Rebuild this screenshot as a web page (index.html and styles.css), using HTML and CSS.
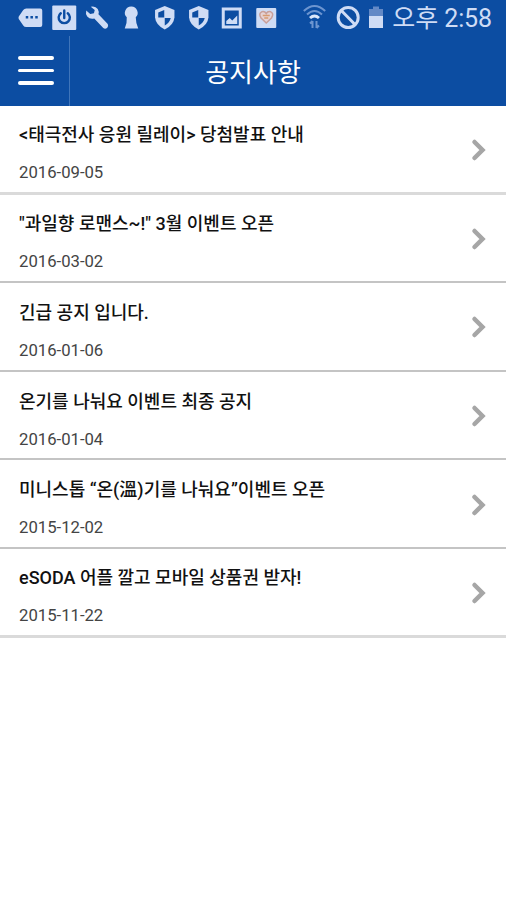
FILE: index.html
```
<!DOCTYPE html>
<html lang="ko">
<head>
  <meta charset="UTF-8">
  <meta name="viewport" content="width=device-width, initial-scale=1">
  <title>공지사항</title>
  <link rel="stylesheet" href="styles.css">
</head>
<body>

<!-- Status bar -->
<div class="statusbar">
  <div class="status-left">
    <svg viewBox="0 0 33 36"><path d="M8 8.500H22Q24 8.500 24 10.500V25Q24 27 22 27H8Q6 27 5 25.500L.5 19Q0 17.700 .5 16.500L5 10Q6 8.500 8 8.500Z"/><path class="cut" d="M7.500 16h2.500v2.500h-2.500zM12.200 16h2.500v2.500h-2.500zM17 16h2.500v2.500h-2.500z"/></svg>
    <svg viewBox="0 0 33 36"><rect y="5.500" width="24" height="24.500" rx="1"/><path class="cut-line" d="M8.500 13.200a5.600 5.600 0 1 0 7 0M12 10.500v7.500"/></svg>
    <svg viewBox="0 0 33 36"><path d="M5.500 6.700Q10 5.500 12.500 9Q14 11.500 13.200 14.200L22.500 24Q23.500 26 22 27.700Q20 29.500 18 28L9 18.500Q4.500 19.500 2 16.500Q0 13.500 1 10.500L5 14L8.700 13.200L9.500 10Z"/></svg>
    <svg viewBox="0 0 33 36"><path d="M12 6.500a6.300 6.300 0 0 1 4.500 10.800Q16.500 23 19 28.500H5.500Q8 23 7.500 17.300A6.300 6.300 0 0 1 12 6.500Z"/></svg>
    <svg viewBox="0 0 33 36"><path d="M12.500 6L22.200 10V17.500Q21.500 25 12.500 29.500Q3.500 25 2.800 17.500V10Z"/><path class="cut" d="M12 10V17.500H6V12.500ZM12.500 18H18.500Q17.500 22.500 12.500 25.500Z"/></svg>
    <svg viewBox="0 0 33 36"><path d="M12.500 6L22.200 10V17.500Q21.500 25 12.500 29.500Q3.500 25 2.800 17.500V10Z"/><path class="cut" d="M12 10V17.500H6V12.500ZM12.500 18H18.500Q17.500 22.500 12.500 25.500Z"/></svg>
    <svg viewBox="0 0 33 36"><rect x="2.500" y="7.500" width="20" height="21"/><path class="cut" d="M5.500 10.500h14v15h-14z"/><path d="M7 24V21L10.500 18L13 20.500L18 15.500V24Z"/></svg>
    <svg viewBox="0 0 33 36"><rect x="3" y="8" width="20" height="20" rx="1"/><path class="heart" d="M13 23L7.800 18Q5 13.500 8.500 11.800Q11.500 11 13 13.500Q14.500 11 17.500 11.800Q21 13.500 18.200 18Z"/><path class="heart-in" d="M9.500 15.500h7M11 18h4"/></svg>
  </div>
  <div class="status-right">
    <svg viewBox="0 0 33 36"><g class="wifi"><path d="M1.800 11Q12.500 1 23.200 11M5 14.500Q12.500 7.500 20 14.500"/><path class="wifi-on" d="M8 18Q12.500 14 17 18"/><path d="M10.500 28V21M8 23.500L10.500 21M14.500 21V28M14.500 28L17 25.500"/></g></svg>
    <svg viewBox="0 0 33 36"><path class="ban" d="M23.200 17.500a10 10 0 1 1-20 0a10 10 0 1 1 20 0M6.300 10.500L20 24.500"/></svg>
    <svg class="battery" viewBox="0 0 24 36"><path class="empty" d="M5 6.500h6v2.500h4v8H1V9h4z"/><path d="M1 16h14v12H1z"/></svg>
    <span class="clock">오후 2:58</span>
  </div>
</div>

<!-- Title bar -->
<div class="header">
  <button class="menu" aria-label="메뉴"><span></span><span></span><span></span></button>
  <h1>공지사항</h1>
</div>

<!-- Notice list -->
<ul class="notices">
  <li>
    <div>
      <p class="title">&lt;태극전사 응원 릴레이&gt; 당첨발표 안내</p>
      <p class="date">2016-09-05</p>
    </div>
    <svg class="arrow" viewBox="0 0 15 24"><path d="M3.500 4L11.500 12L3.500 20"/></svg>
  </li>
  <li>
    <div>
      <p class="title">"과일향 로맨스~!" 3월 이벤트 오픈</p>
      <p class="date">2016-03-02</p>
    </div>
    <svg class="arrow" viewBox="0 0 15 24"><path d="M3.500 4L11.500 12L3.500 20"/></svg>
  </li>
  <li>
    <div>
      <p class="title">긴급 공지 입니다.</p>
      <p class="date">2016-01-06</p>
    </div>
    <svg class="arrow" viewBox="0 0 15 24"><path d="M3.500 4L11.500 12L3.500 20"/></svg>
  </li>
  <li>
    <div>
      <p class="title">온기를 나눠요 이벤트 최종 공지</p>
      <p class="date">2016-01-04</p>
    </div>
    <svg class="arrow" viewBox="0 0 15 24"><path d="M3.500 4L11.500 12L3.500 20"/></svg>
  </li>
  <li>
    <div>
      <p class="title">미니스톱 “온(溫)기를 나눠요”이벤트 오픈</p>
      <p class="date">2015-12-02</p>
    </div>
    <svg class="arrow" viewBox="0 0 15 24"><path d="M3.500 4L11.500 12L3.500 20"/></svg>
  </li>
  <li>
    <div>
      <p class="title">eSODA 어플 깔고 모바일 상품권 받자!</p>
      <p class="date">2015-11-22</p>
    </div>
    <svg class="arrow" viewBox="0 0 15 24"><path d="M3.500 4L11.500 12L3.500 20"/></svg>
  </li>
</ul>

</body>
</html>
```
FILE: styles.css
```
* {
  box-sizing: border-box;
}

body {
  margin: 0;
  background: #fff;
  font-family: Roboto, "Noto Sans CJK KR", sans-serif;
}

/* Status bar */
.statusbar {
  display: flex;
  justify-content: space-between;
  height: 36px;
  padding: 0 14px 0 18px;
  background: #0c4da2;
  color: #cfdcf5;
}

.status-left,
.status-right {
  display: flex;
}

.statusbar svg {
  width: 33.5px;
  height: 36px;
  fill: #cfdcf5;
}

.status-right svg {
  width: 33px;
}

.status-right .battery {
  width: 24px;
}

.statusbar .cut {
  fill: #0c4da2;
}

.statusbar .cut-line {
  fill: none;
  stroke: #0c4da2;
  stroke-width: 2.4;
  stroke-linecap: round;
}

.statusbar .heart {
  fill: #e6d3d6;
  stroke: #c9a09b;
  stroke-width: 1.5;
}

.heart-in {
  stroke: #d89a70;
  stroke-width: 1.5;
}

.wifi {
  fill: none;
  stroke: #6d95d0;
  stroke-width: 2;
}

.wifi-on {
  stroke: #dce7fa;
  stroke-width: 3;
}

.ban {
  fill: none;
  stroke: #cfdcf5;
  stroke-width: 3;
}

.statusbar .empty {
  fill: #6389c6;
}

.clock {
  padding-top: 1px;
  font-size: 25px;
  line-height: 36px;
  letter-spacing: -0.1px;
  white-space: nowrap;
}

/* Title bar */
.header {
  display: flex;
  height: 70px;
  background: #0c4da2;
  color: #fff;
}

.menu {
  display: flex;
  flex-direction: column;
  gap: 9px;
  width: 70px;
  padding: 20px 16px 0 18px;
  background: none;
  border: 0;
  border-right: 1px solid #3f75ba;
}

.menu span {
  width: 36px;
  height: 3.5px;
  border-radius: 2px;
  background: #fff;
}

.header h1 {
  flex: 1;
  margin: 0;
  padding: 2px 70px 0 0;
  font-size: 26px;
  font-weight: 400;
  line-height: 70px;
  text-align: center;
}

/* Notice list */
.notices {
  margin: 0;
  padding: 0;
  list-style: none;
}

.notices li {
  display: flex;
  align-items: center;
  justify-content: space-between;
  height: 88.6px;
  padding: 2px 20px 0 19px;
  border-bottom: 2px solid #c4c4c4;
}

.notices li:first-child,
.notices li:last-child {
  border-bottom: 3px solid #dadada;
}

.notices p {
  margin: 0;
  white-space: nowrap;
}

.notices .title {
  padding-top: 9px;
  color: #111;
  font-size: 18px;
  font-weight: 500;
  line-height: 28px;
}

.notices .date {
  margin-top: 10px;
  color: #444;
  font-size: 16.7px;
  line-height: 28px;
}

.arrow {
  width: 15px;
  height: 24px;
  fill: none;
  stroke: #a6a6a6;
  stroke-width: 4.5;
  stroke-linecap: round;
}
```
